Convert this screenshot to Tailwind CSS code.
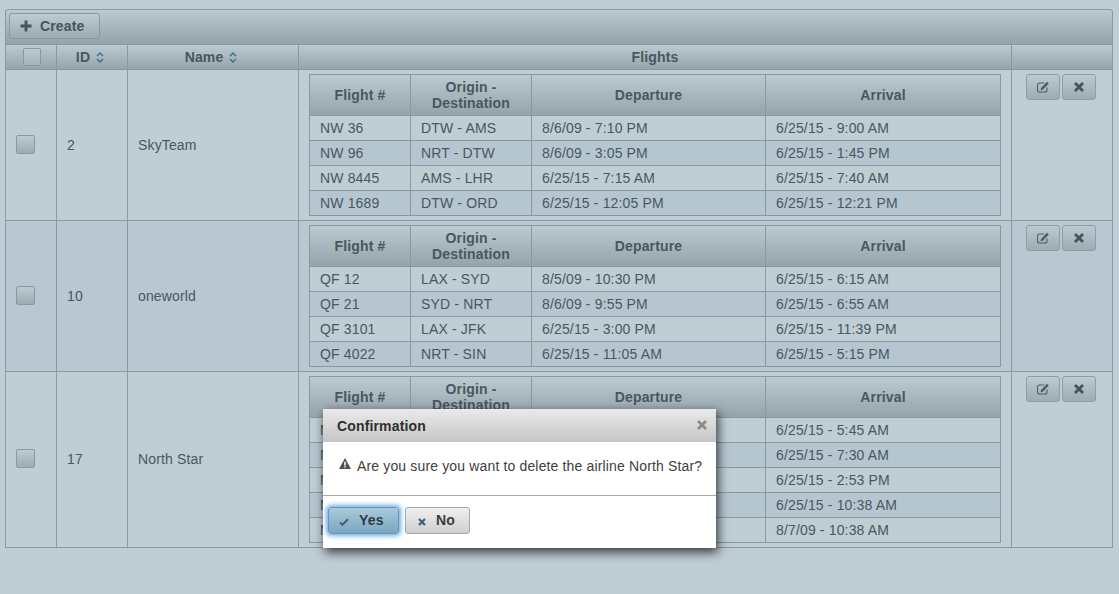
<!DOCTYPE html>
<html lang="en">
<head>
  <meta charset="UTF-8" />
  <meta name="viewport" content="width=device-width, initial-scale=1.0"/>
  <title>Airlines</title>
  <script src="https://cdn.jsdelivr.net/npm/@tailwindcss/browser@4"></script>
</head>
<body class="bg-[#bfcdd4] text-[#4a5660] font-['Liberation_Sans',Arial,sans-serif] text-[14px] tracking-[0.15px] h-[594px] w-[1119px] overflow-hidden relative">
  <div class="h-px bg-[#c9c6ca]"></div>

  <div class="mt-2 ml-[5px] w-[1108px] h-[36px] border border-[#8a989f] rounded-t-[3px] bg-gradient-to-b from-[#bccad1] to-[#93a3aa] pl-[3px] pt-[3px]">
    <button class="h-[26px] w-[91px] border border-[#8a989f] rounded-[3px] bg-gradient-to-b from-[#bccad1] to-[#9dacb3] flex items-center pl-[10px] gap-[8px] font-bold text-[#46525c]">
      <svg width="12" height="12" viewBox="0 0 12 12"><path d="M4.6 0.5h2.8v4.1h4.1v2.8H7.4v4.1H4.6V7.4H.5V4.6h4.1z" fill="#46525c"/></svg>
      Create
    </button>
  </div>

  <table class="ml-[5px] w-[1107px] table-fixed border-collapse -mt-px">
    <colgroup>
      <col class="w-[51px]"><col class="w-[71px]"><col class="w-[171px]"><col class="w-[713px]"><col class="w-[101px]">
    </colgroup>
    <thead>
      <tr class="h-[25px] bg-gradient-to-b from-[#bccad1] to-[#93a3aa] font-bold">
        <th class="border border-[#8a989f] p-0"><span class="block w-[18px] h-[18px] ml-[17px] border border-[#8a989f] rounded-[2px] bg-gradient-to-b from-[#bccad1] to-[#a5b3ba]"></span></th>
        <th class="border border-[#8a989f] p-0">
          <span class="inline-flex items-center gap-[6px] -ml-[4px]">ID
            <svg width="8" height="11" viewBox="0 0 8 11" fill="none" stroke="#3f6b85" stroke-width="1.4"><path d="M1 4l3-3 3 3M1 7l3 3 3-3"/></svg>
          </span>
        </th>
        <th class="border border-[#8a989f] p-0">
          <span class="inline-flex items-center gap-[6px] -ml-[4px]">Name
            <svg width="8" height="11" viewBox="0 0 8 11" fill="none" stroke="#3f6b85" stroke-width="1.4"><path d="M1 4l3-3 3 3M1 7l3 3 3-3"/></svg>
          </span>
        </th>
        <th class="border border-[#8a989f] p-0">Flights</th>
        <th class="border border-[#8a989f] p-0"></th>
      </tr>
    </thead>
    <tbody id="airlines"></tbody>
  </table>

  <!-- confirm dialog -->
  <div class="absolute left-[323px] top-[409px] w-[393px] h-[139px] bg-white shadow-[2px_4px_10px_rgba(0,0,0,0.75)] text-[#404040]">
    <div class="h-[33px] bg-gradient-to-b from-[#eaeaea] to-[#c6c6c6] flex items-center justify-between pl-[14px] pr-[9px]">
      <span class="font-bold text-[#2e2e2e] mt-[2px]">Confirmation</span>
      <svg class="-mt-[2px]" width="10" height="10" viewBox="0 0 10 10" stroke="#8a8a8a" stroke-width="2.8"><path d="M1 1l8 8M9 1l-8 8"/></svg>
    </div>
    <div class="h-[53px] pt-[14px] pl-[16px] flex items-start gap-[6px]">
      <svg class="mt-[2px]" width="12" height="11" viewBox="0 0 12 11"><path fill-rule="evenodd" d="M6 0l6 11H0zM5.2 3.8v3.6h1.6V3.8zM5.2 8.2v1.4h1.6V8.2z" fill="#505050"/></svg>
      <span>Are you sure you want to delete the airline North Star?</span>
    </div>
    <div class="border-t border-[#a8a8a8] pt-[11px] pl-[5px] flex gap-[6px]">
      <button class="h-[27px] w-[71px] border border-[#6f93aa] rounded-[3px] bg-gradient-to-b from-[#a9cadb] to-[#7ba7c0] shadow-[0_0_4px_2px_#6cb0ee] flex items-center pl-[10px] gap-[10px] font-bold text-[#2f3a42]">
        <svg class="mt-[3px]" width="10" height="8" viewBox="0 0 12 10" fill="none" stroke="#3c6176" stroke-width="2.4"><path d="M1 5.5l3 3 7-7"/></svg>
        Yes
      </button>
      <button class="h-[27px] w-[65px] border border-[#a8a8a8] rounded-[3px] bg-gradient-to-b from-[#f0f0f0] to-[#cfcfcf] flex items-center pl-[12px] gap-[10px] font-bold text-[#3c3c3c]">
        <svg class="mt-[2px]" width="8" height="8" viewBox="0 0 8 8" stroke="#3c6176" stroke-width="2.2"><path d="M1 1l6 6M7 1l-6 6"/></svg>
        No
      </button>
    </div>
  </div>

  <script>
    const airlines = [
      { id: 2, name: "SkyTeam", rowClass: "bg-[#bfcdd4]", flights: [
        ["NW 36", "DTW - AMS", "8/6/09 - 7:10 PM", "6/25/15 - 9:00 AM"],
        ["NW 96", "NRT - DTW", "8/6/09 - 3:05 PM", "6/25/15 - 1:45 PM"],
        ["NW 8445", "AMS - LHR", "6/25/15 - 7:15 AM", "6/25/15 - 7:40 AM"],
        ["NW 1689", "DTW - ORD", "6/25/15 - 12:05 PM", "6/25/15 - 12:21 PM"]
      ]},
      { id: 10, name: "oneworld", rowClass: "bg-[#b8c7d2]", flights: [
        ["QF 12", "LAX - SYD", "8/5/09 - 10:30 PM", "6/25/15 - 6:15 AM"],
        ["QF 21", "SYD - NRT", "8/6/09 - 9:55 PM", "6/25/15 - 6:55 AM"],
        ["QF 3101", "LAX - JFK", "6/25/15 - 3:00 PM", "6/25/15 - 11:39 PM"],
        ["QF 4022", "NRT - SIN", "6/25/15 - 11:05 AM", "6/25/15 - 5:15 PM"]
      ]},
      { id: 17, name: "North Star", rowClass: "bg-[#bfcdd4]", flights: [
        ["NS 10", "JFK - LHR", "6/25/15 - 6:10 PM", "6/25/15 - 5:45 AM"],
        ["NS 22", "LHR - FRA", "6/25/15 - 5:05 AM", "6/25/15 - 7:30 AM"],
        ["NS 31", "FRA - ORD", "6/25/15 - 8:40 AM", "6/25/15 - 2:53 PM"],
        ["NS 47", "ORD - DEN", "6/25/15 - 8:10 AM", "6/25/15 - 10:38 AM"],
        ["NS 58", "DEN - SFO", "8/7/09 - 8:05 AM", "8/7/09 - 10:38 AM"]
      ]}
    ];

    const btn = "h-[26px] w-[34px] border border-[#8f9da4] rounded-[3px] bg-gradient-to-b from-[#bccad1] to-[#9dacb3] flex items-center justify-center";

    function flightRows(flights) {
      return flights.map((f, i) => `
        <tr class="h-[25px] ${i % 2 ? 'bg-[#b6c6d1]' : 'bg-[#bfcdd4]'}">
          ${f.map(v => `<td class="border border-[#8a989f] px-[10px] py-0">${v}</td>`).join("")}
        </tr>`).join("");
    }

    document.getElementById("airlines").innerHTML = airlines.map(a => `
      <tr class="${a.rowClass}">
        <td class="border border-[#8a989f] p-0"><span class="block w-[19px] h-[19px] ml-[10px] -mt-[2px] border border-[#8a989f] rounded-[2px] bg-gradient-to-b from-[#bccad1] to-[#9dacb3]"></span></td>
        <td class="border border-[#8a989f] px-[10px] py-0">${a.id}</td>
        <td class="border border-[#8a989f] px-[10px] py-0">${a.name}</td>
        <td class="border border-[#8a989f] pl-[10px] pr-[10px] pt-[4px] pb-[4px]">
          <table class="w-[691px] table-fixed border-collapse">
            <colgroup><col class="w-[101px]"><col class="w-[121px]"><col class="w-[234px]"><col class="w-[235px]"></colgroup>
            <thead>
              <tr class="h-[41px] bg-gradient-to-b from-[#bccad1] to-[#93a3aa] font-bold leading-[16px]">
                <th class="border border-[#8a989f] p-0">Flight #</th>
                <th class="border border-[#8a989f] p-0">Origin -<br>Destination</th>
                <th class="border border-[#8a989f] p-0">Departure</th>
                <th class="border border-[#8a989f] p-0">Arrival</th>
              </tr>
            </thead>
            <tbody>${flightRows(a.flights)}</tbody>
          </table>
        </td>
        <td class="border border-[#8a989f] pl-[14px] pt-[4px] align-top">
          <div class="flex gap-[2px]">
            <button class="${btn}">
              <svg width="14" height="14" viewBox="0 0 14 13" fill="none"><path d="M8 2.5H3.5a2 2 0 0 0-2 2v5a2 2 0 0 0 2 2h5.5a2 2 0 0 0 2-2V7" stroke="#4f5d67" stroke-width="1.1"/><path d="M5 7.5L11 1.3l1.8 1.7-6 6.2-2.2.5z" fill="#4f5d67"/></svg>
            </button>
            <button class="${btn}">
              <svg width="10" height="10" viewBox="0 0 10 10" stroke="#46525c" stroke-width="2.8"><path d="M1 1l8 8M9 1l-8 8"/></svg>
            </button>
          </div>
        </td>
      </tr>`).join("");
  </script>
</body>
</html>
